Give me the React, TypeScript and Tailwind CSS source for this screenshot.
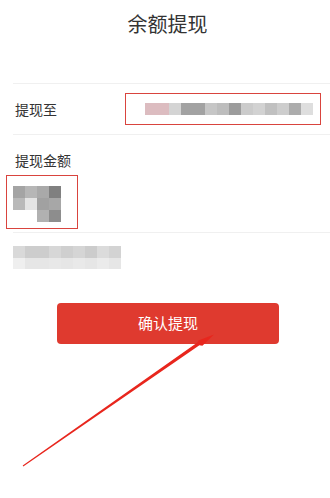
import React from "react";

// pixelated (mosaic) cells as seen in the screenshot
const accountCells = [
  "#dcbcc0", "#dcbcc0", "#d4d4d4", "#a2a2a2", "#a2a2a2", "#c6c6c6", "#bdbdbd",
  "#9c9c9c", "#cbcbcb", "#d2d2d2", "#c0c0c0", "#cdcdcd", "#acacac", "#dedede",
];

const amountCells = [
  "#a4a4a4", "#b6b6b6", "#a9a9a9", "#808080",
  "#b9b9b9", "#e4e4e4", "#a1a1a1", "#a7a7a7",
  "#ffffff", "#ffffff", "#b1b1b1", "#8d8d8d",
];

const balanceRow1 = ["#d9d9d9", "#cdcdcd", "#cdcdcd", "#d7d7d7", "#cfcfcf", "#d5d5d5", "#cccccc", "#dbdbdb", "#d3d3d3"];
const balanceRow2 = ["#efefef", "#e6e6e6", "#e6e6e6", "#e8e8e8", "#e6e6e6", "#e9e9e9", "#e6e6e6", "#ebebeb", "#e6e6e6"];

function Arrow() {
  return (
    <svg
      className="pointer-events-none absolute left-0 top-0"
      width="330"
      height="498"
      viewBox="0 0 330 498"
    >
      <polygon
        points="22.7,465.5 197.4,342.5 198.4,340.5 214,334.5 202.4,345.8 199.4,345.2 23.3,466.5"
        fill="#e8261d"
      />
    </svg>
  );
}

export default function App() {
  return (
    <div
      className="relative h-[498px] w-[330px] overflow-hidden bg-white text-[#333]"
      style={{ fontFamily: '"Noto Sans CJK SC", "Noto Sans", sans-serif' }}
    >
      {/* header */}
      <div className="flex h-[83px] justify-center pl-[5px] pt-[12px]">
        <h1 className="text-[20px] leading-[24px] font-normal">余额提现</h1>
      </div>

      {/* withdraw to */}
      <div className="ml-[13px] flex h-[52px] items-center border-y border-[#f0f0f0]">
        <span className="w-[112px] pl-[2px] text-[14px] leading-[20px]">提现至</span>
        <div className="flex h-[32px] w-[196px] items-center border-[1.5px] border-[#d9443e] pl-[19px]">
          <div className="flex h-[12px]">
            {accountCells.map((c, i) => (
              <div key={i} className="h-[12px] w-[12px]" style={{ background: c }} />
            ))}
          </div>
        </div>
      </div>

      {/* amount */}
      <div className="pt-[15px]">
        <p className="pl-[15px] text-[14px] leading-[20px]">提现金额</p>
        <div className="ml-[6px] mt-[5px] h-[54px] w-[72px] border-[1.5px] border-[#d9443e] pl-[6px] pt-[9.5px]">
          <div className="grid w-[48px] grid-cols-4">
            {amountCells.map((c, i) => (
              <div key={i} className="h-[12px] w-[12px]" style={{ background: c }} />
            ))}
          </div>
        </div>
        <div className="ml-[13px] mt-[3px] border-t border-[#f0f0f0]" />
      </div>

      {/* balance hint */}
      <div className="ml-[13px] mt-[13px] flex flex-col">
        <div className="flex">
          {balanceRow1.map((c, i) => (
            <div key={i} className="h-[12px] w-[12px]" style={{ background: c }} />
          ))}
        </div>
        <div className="flex">
          {balanceRow2.map((c, i) => (
            <div key={i} className="h-[11px] w-[12px]" style={{ background: c }} />
          ))}
        </div>
      </div>

      {/* confirm button */}
      <button className="ml-[57px] mt-[34px] flex h-[41px] w-[222px] items-center justify-center rounded-[4px] bg-[#df3a2f] text-[15px] text-white">
        确认提现
      </button>

      <Arrow />
    </div>
  );
}
